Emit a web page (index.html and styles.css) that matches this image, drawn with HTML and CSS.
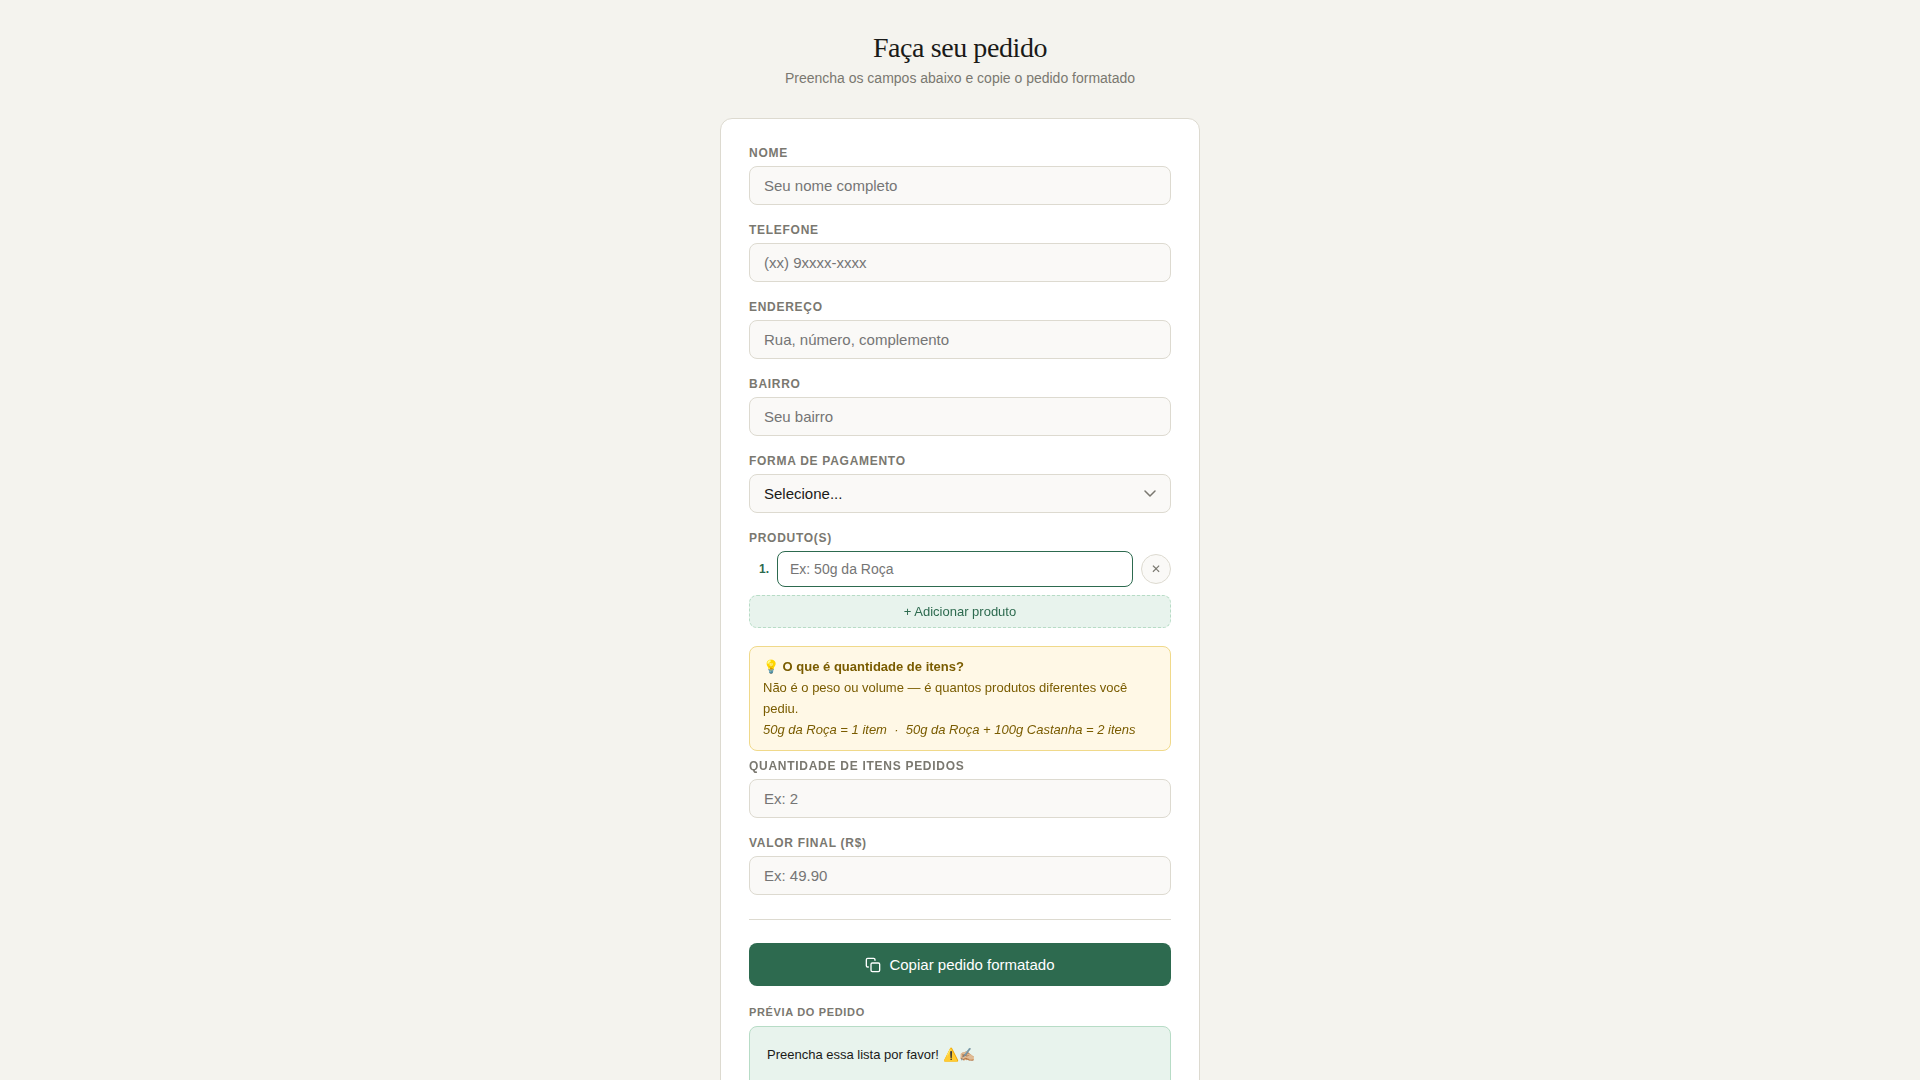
FILE: index.html
```
<!DOCTYPE html>
<html lang="pt-BR">
<head>
    <meta charset="UTF-8">
    <meta name="viewport" content="width=device-width, initial-scale=1.0">
    <title>Faça seu pedido</title>
    <link rel="stylesheet" href="styles.css">
</head>
<body>
<header class="header">
    <h1>Faça seu pedido</h1>
    <p>Preencha os campos abaixo e copie o pedido formatado</p>
</header>

<main class="card">
    <form id="pedidoForm">
        <div class="field">
            <label for="nome">Nome</label>
            <input type="text" id="nome" placeholder="Seu nome completo">
        </div>
        <div class="field">
            <label for="telefone">Telefone</label>
            <input type="tel" id="telefone" placeholder="(xx) 9xxxx-xxxx">
        </div>
        <div class="field">
            <label for="endereco">Endereço</label>
            <input type="text" id="endereco" placeholder="Rua, número, complemento">
        </div>
        <div class="field">
            <label for="bairro">Bairro</label>
            <input type="text" id="bairro" placeholder="Seu bairro">
        </div>
        <div class="field">
            <label for="pagamento">Forma de pagamento</label>
            <div class="select-wrap">
                <select id="pagamento">
                    <option value="">Selecione...</option>
                </select>
                <svg class="chevron" viewBox="0 0 12 8" fill="none" stroke="currentColor" stroke-width="1.5" stroke-linecap="round" stroke-linejoin="round" aria-hidden="true">
                    <path d="M1 1l5 5 5-5"/>
                </svg>
            </div>
        </div>

        <!-- produtos -->
        <div class="field">
            <label for="produto1">Produto(s)</label>
            <div class="produto-row">
                <span class="produto-num">1.</span>
                <input type="text" id="produto1" class="produto-input" placeholder="Ex: 50g da Roça" autofocus>
                <button type="button" class="btn-remove">✕</button>
            </div>
            <button type="button" class="btn-add">+ Adicionar produto</button>
        </div>

        <div class="tip">
            <strong>💡 O que é quantidade de itens?</strong><br>
            Não é o peso ou volume — é quantos produtos diferentes você pediu.<br>
            <em>50g da Roça = 1 item &nbsp;·&nbsp; 50g da Roça + 100g Castanha = 2 itens</em>
        </div>
        <div class="field">
            <label for="quantidade">Quantidade de itens pedidos</label>
            <input type="number" id="quantidade" placeholder="Ex: 2" min="1">
        </div>
        <div class="field">
            <label for="valor">Valor final (R$)</label>
            <input type="number" id="valor" placeholder="Ex: 49.90" step="0.01">
        </div>

        <hr class="divider">

        <button type="button" class="btn-copy">
            <svg class="copy-icon" viewBox="0 0 24 24" fill="none" stroke="currentColor" stroke-width="2" stroke-linecap="round" stroke-linejoin="round" aria-hidden="true">
                <rect x="9" y="9" width="13" height="13" rx="2"/>
                <path d="M5 15H4a2 2 0 0 1-2-2V4a2 2 0 0 1 2-2h9a2 2 0 0 1 2 2v1"/>
            </svg>
            Copiar pedido formatado
        </button>
    </form>

    <!-- prévia -->
    <h2 class="preview-title">Prévia do pedido</h2>
    <div class="preview">Preencha essa lista por favor! ⚠️✍🏼</div>
</main>
</body>
</html>
```

FILE: styles.css
```
* {
    box-sizing: border-box;
    margin: 0;
    padding: 0;
}

body {
    font-family: "Liberation Sans", Arial, sans-serif;
    background-color: #f4f3ee;
    color: #1a1a18;
    min-height: 100vh;
    padding: 32px 16px 64px;
}

.header {
    text-align: center;
    margin-bottom: 32px;
}

.header h1 {
    font-family: "Liberation Serif", "Times New Roman", serif;
    font-size: 28px;
    font-weight: 400;
    letter-spacing: -0.015em;
    margin-bottom: 6px;
}

.header p {
    font-size: 14px;
    color: #7a7870;
}

.card {
    background-color: #fff;
    border: 1px solid #dddad0;
    border-radius: 12px;
    max-width: 480px;
    margin: 0 auto;
    padding: 27px 28px;
}

.field {
    margin-bottom: 18px;
}

label {
    display: block;
    font-size: 12px;
    font-weight: bold;
    letter-spacing: 0.06em;
    text-transform: uppercase;
    color: #7a7870;
    margin-bottom: 6px;
}

input,
select {
    display: block;
    width: 100%;
    font-family: inherit;
    font-size: 15px;
    color: #1a1a18;
    background-color: #faf9f7;
    border: 1px solid #dddad0;
    border-radius: 8px;
    padding: 10px 14px;
    outline: none;
    appearance: none;
}

input:focus,
select:focus {
    border-color: #2d6a4f;
    background-color: #fff;
}

.select-wrap {
    position: relative;
}

.chevron {
    position: absolute;
    right: 15px;
    top: 16px;
    width: 12px;
    height: 8px;
    color: #7a7870;
    pointer-events: none;
}

.produto-row {
    display: flex;
    align-items: center;
    gap: 8px;
    margin-bottom: 8px;
}

.produto-num {
    min-width: 20px;
    font-size: 12px;
    font-weight: bold;
    text-align: right;
    color: #2d6a4f;
}

.produto-input {
    flex: 1;
    font-size: 14px;
    padding: 9px 12px;
}

.btn-remove {
    width: 30px;
    height: 30px;
    font-family: inherit;
    font-size: 12px;
    color: #7a7870;
    background-color: #faf9f7;
    border: 1px solid #dddad0;
    border-radius: 50%;
    cursor: pointer;
}

.btn-add {
    display: block;
    width: 100%;
    font-family: inherit;
    font-size: 13px;
    color: #2d6a4f;
    background-color: #e8f3ed;
    border: 1px dashed #b7dcc6;
    border-radius: 8px;
    padding: 8px;
    cursor: pointer;
}

.tip {
    font-size: 13px;
    line-height: 21px;
    color: #7a5c00;
    background-color: #fff8e6;
    border: 1px solid #f0d98a;
    border-radius: 8px;
    padding: 9px 13px 10px;
    margin-bottom: 8px;
}

.divider {
    border: none;
    border-top: 1px solid #dddad0;
    margin: 24px 0 23px;
}

.btn-copy {
    display: flex;
    align-items: center;
    justify-content: center;
    gap: 8px;
    width: 100%;
    font-family: inherit;
    font-size: 15px;
    color: #fff;
    background-color: #2d6a4f;
    border: none;
    border-radius: 8px;
    padding: 13px;
    cursor: pointer;
}

.copy-icon {
    width: 16px;
    height: 16px;
}

.preview-title {
    font-size: 11px;
    font-weight: bold;
    letter-spacing: 0.06em;
    text-transform: uppercase;
    color: #7a7870;
    margin: 20px 0 8px;
}

.preview {
    font-size: 13px;
    line-height: 22px;
    background-color: #e8f3ed;
    border: 1px solid #b7dcc6;
    border-radius: 8px;
    padding: 17px;
    min-height: 240px;
}
```
